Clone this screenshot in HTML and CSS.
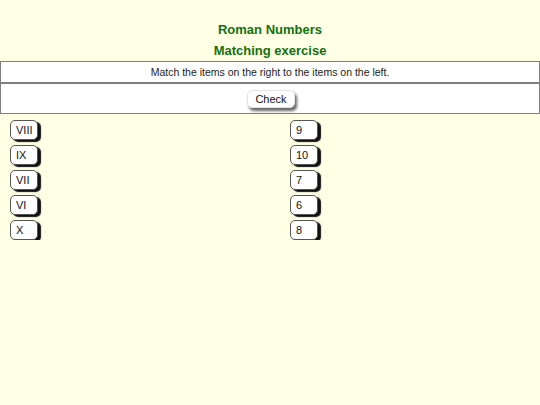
FILE: index.html
```html
<!DOCTYPE html>
<html>
<head>
<meta charset="utf-8">
<link rel="stylesheet" href="styles.css">
</head>
<body>
<div class="titles">
  <div class="title">Roman Numbers</div>
  <div class="title">Matching exercise</div>
</div>
<div class="panel">
  <div class="row instr">Match the items on the right to the items on the left.</div>
  <div class="row actions"><button class="btn">Check</button></div>
</div>
<div class="cols">
  <div class="col">
    <div class="item">VIII</div>
    <div class="item">IX</div>
    <div class="item">VII</div>
    <div class="item">VI</div>
    <div class="item">X</div>
  </div>
  <div class="col">
    <div class="item">9</div>
    <div class="item">10</div>
    <div class="item">7</div>
    <div class="item">6</div>
    <div class="item">8</div>
  </div>
</div>
</body>
</html>
```
FILE: styles.css
```css
html, body {
  margin: 0;
  padding: 0;
  background: #ffffe5;
  font-family: "Liberation Sans", Arial, sans-serif;
}
.titles {
  padding-top: 19px;
  text-align: center;
}
.title {
  color: #13700f;
  font-weight: bold;
  font-size: 13px;
  line-height: 21px;
}
.panel {
  border: 1px solid #808080;
  background: #ffffff;
}
.row {
  text-align: center;
  font-size: 10.5px;
  color: #222;
}
.instr {
  height: 20px;
  line-height: 21px;
  border-bottom: 2px solid #808080;
}
.actions {
  height: 29px;
  display: flex;
  align-items: center;
  justify-content: center;
}
.btn {
  font-family: "Liberation Sans", Arial, sans-serif;
  font-size: 11px;
  color: #111;
  background: #fff;
  border: 1px solid #e4e4e4;
  border-radius: 5px;
  padding: 0 7px;
  height: 18px;
  box-shadow: 2px 3px 3px #666;
  margin-left: 2px;
}
.cols {
  display: grid;
  grid-template-columns: 280px 1fr;
  padding-top: 6px;
}
.col {
  display: flex;
  flex-direction: column;
  align-items: flex-start;
  gap: 5px;
  padding-left: 10px;
}
.item {
  box-sizing: border-box;
  width: 28px;
  height: 20px;
  border: 1px solid #555;
  border-radius: 5px;
  background: #fff;
  font-size: 11px;
  line-height: 18px;
  padding-left: 5px;
  color: #111;
  box-shadow: 3px 2px 1px #111;
}
```
